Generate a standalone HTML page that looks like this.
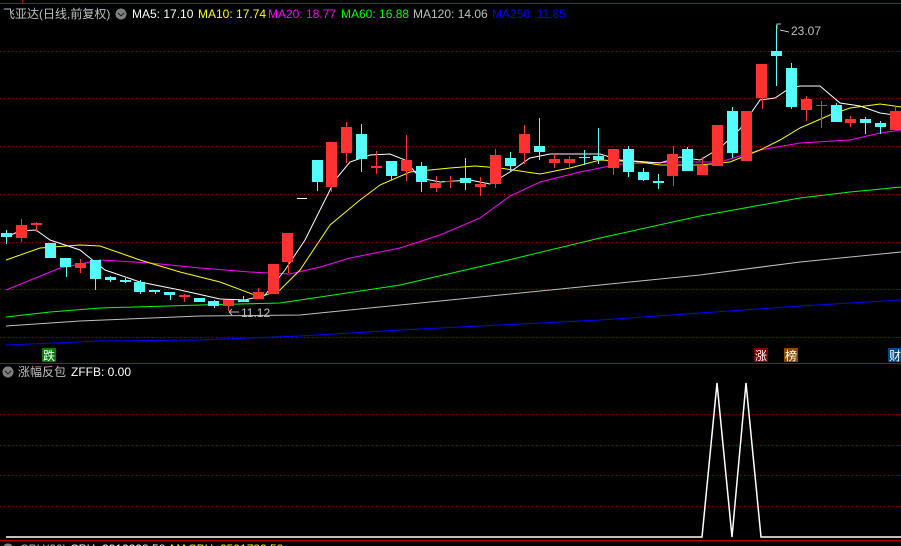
<!DOCTYPE html>
<html><head><meta charset="utf-8"><style>
html,body{margin:0;padding:0;background:#000;width:901px;height:546px;overflow:hidden}
svg{display:block}
text{font-family:"Liberation Sans","Noto Sans CJK SC",sans-serif;font-size:12px}
</style></head><body>
<svg width="901" height="546" viewBox="0 0 901 546" xmlns="http://www.w3.org/2000/svg" shape-rendering="crispEdges">
<rect width="901" height="546" fill="#000"/>
<line x1="0" y1="3.5" x2="901" y2="3.5" stroke="#c00000"/>
<line x1="22.5" y1="0" x2="22.5" y2="3" stroke="#c00000"/>
<g stroke="#900000" stroke-dasharray="1 3">
<line x1="0" y1="51.5" x2="901" y2="51.5"/>
<line x1="0" y1="98.5" x2="901" y2="98.5"/>
<line x1="0" y1="146.5" x2="901" y2="146.5"/>
<line x1="0" y1="194.5" x2="901" y2="194.5"/>
<line x1="0" y1="242.5" x2="901" y2="242.5"/>
<line x1="0" y1="289.5" x2="901" y2="289.5"/>
<line x1="0" y1="337.5" x2="901" y2="337.5"/>
<line x1="0" y1="414.5" x2="901" y2="414.5"/>
<line x1="0" y1="445.5" x2="901" y2="445.5"/>
<line x1="0" y1="475.5" x2="901" y2="475.5"/>
<line x1="0" y1="506.5" x2="901" y2="506.5"/>
</g>
<line x1="0" y1="363.5" x2="901" y2="363.5" stroke="#c00000"/>
<line x1="0" y1="540.5" x2="901" y2="540.5" stroke="#c00000"/>

<g fill="none" stroke-width="1" shape-rendering="auto">
<polyline stroke="#0000ff" points="6,345 100,341 200,340 300,336 400,330 500,325 600,320 700,313 800,306 901,300"/>
<polyline stroke="#c0c0c0" points="6,326 80,321 200,316 300,315 400,305 500,295 600,285 700,275 800,262 901,252"/>
<polyline stroke="#00ff00" points="6,317 50,312 100,308 200,305 280,303 320,297 400,285 500,262 600,238 700,216 750,207 800,198 850,192 901,187"/>
<polyline stroke="#ff00ff" points="6,290 60,268 100,260 150,263 200,268 250,272 290,274 320,267 350,258 400,248 440,235 480,218 510,196 540,182 580,172 620,164 680,162 720,162 760,150 800,143 850,140 880,133 901,130"/>
<polyline stroke="#ffff00" points="6,260 40,248 80,245 100,246 140,260 180,272 220,282 260,297 280,290 300,270 330,225 360,200 380,185 410,172 450,168 475,166 500,168 540,174 570,168 600,160 640,162 660,165 700,165 730,162 760,150 780,140 800,128 830,115 850,108 880,104 901,107"/>
<polyline stroke="#ffffff" points="6,237 20,231 36,230 50,240 80,250 105,270 140,282 180,290 220,299 245,300 265,295 285,270 305,240 320,210 335,180 350,162 370,155 390,154 405,160 420,178 440,182 470,180 490,184 510,172 530,158 550,154 580,154 600,154 620,160 660,163 680,157 700,160 720,148 740,129 760,100 775,98 790,88 800,86 820,86 840,103 860,106 880,113 901,116"/>
</g>

<g>
<line x1="6.5" y1="230" x2="6.5" y2="244" stroke="#54fcfc"/><rect x="1" y="233" width="11" height="4" fill="#54fcfc"/>
<line x1="21.5" y1="219" x2="21.5" y2="242" stroke="#ff3232"/><rect x="16" y="225" width="11" height="13" fill="#ff3232"/>
<line x1="36.5" y1="222" x2="36.5" y2="232" stroke="#ff3232"/><rect x="31" y="223" width="11" height="2" fill="#ff3232"/>
<rect x="45" y="243" width="11" height="15" fill="#54fcfc"/>
<line x1="66.5" y1="258" x2="66.5" y2="277" stroke="#54fcfc"/><rect x="60" y="258" width="11" height="9" fill="#54fcfc"/>
<line x1="80.5" y1="259" x2="80.5" y2="273" stroke="#ff3232"/><rect x="75" y="263" width="11" height="5" fill="#ff3232"/>
<line x1="95.5" y1="260" x2="95.5" y2="290" stroke="#54fcfc"/><rect x="90" y="260" width="11" height="19" fill="#54fcfc"/>
<line x1="110.5" y1="276" x2="110.5" y2="282" stroke="#54fcfc"/><rect x="105" y="277" width="11" height="3" fill="#54fcfc"/>
<line x1="125.5" y1="278" x2="125.5" y2="283" stroke="#54fcfc"/><rect x="120" y="280" width="11" height="2" fill="#54fcfc"/>
<line x1="140.5" y1="280" x2="140.5" y2="294" stroke="#54fcfc"/><rect x="134" y="282" width="11" height="10" fill="#54fcfc"/>
<line x1="155.5" y1="290" x2="155.5" y2="294" stroke="#54fcfc"/><rect x="149" y="290" width="11" height="2" fill="#54fcfc"/>
<line x1="170.5" y1="292" x2="170.5" y2="300" stroke="#54fcfc"/><rect x="164" y="292" width="11" height="3" fill="#54fcfc"/>
<line x1="184.5" y1="294" x2="184.5" y2="302" stroke="#ff3232"/><rect x="179" y="295" width="11" height="2" fill="#ff3232"/>
<rect x="194" y="298" width="11" height="4" fill="#54fcfc"/>
<line x1="214.5" y1="300" x2="214.5" y2="308" stroke="#54fcfc"/><rect x="208" y="301" width="11" height="5" fill="#54fcfc"/>
<line x1="228.5" y1="300" x2="228.5" y2="311" stroke="#ff3232"/><rect x="223" y="300" width="11" height="6" fill="#ff3232"/>
<line x1="243.5" y1="296" x2="243.5" y2="302" stroke="#54fcfc"/><rect x="238" y="300" width="11" height="2" fill="#54fcfc"/>
<line x1="258.5" y1="288" x2="258.5" y2="299" stroke="#ff3232"/><rect x="253" y="292" width="11" height="7" fill="#ff3232"/>
<rect x="268" y="264" width="11" height="30" fill="#ff3232"/>
<line x1="288.5" y1="233" x2="288.5" y2="273" stroke="#ff3232"/><rect x="282" y="233" width="11" height="29" fill="#ff3232"/>
<rect x="297" y="198" width="10" height="1" fill="#ffffff"/>
<line x1="317.5" y1="160" x2="317.5" y2="191" stroke="#54fcfc"/><rect x="312" y="160" width="11" height="22" fill="#54fcfc"/>
<line x1="331.5" y1="142" x2="331.5" y2="192" stroke="#ff3232"/><rect x="326" y="142" width="11" height="45" fill="#ff3232"/>
<line x1="346.5" y1="122" x2="346.5" y2="163" stroke="#ff3232"/><rect x="341" y="127" width="11" height="26" fill="#ff3232"/>
<line x1="361.5" y1="124" x2="361.5" y2="172" stroke="#54fcfc"/><rect x="356" y="134" width="11" height="25" fill="#54fcfc"/>
<line x1="376.5" y1="151" x2="376.5" y2="174" stroke="#ff3232"/><rect x="371" y="166" width="11" height="2" fill="#ff3232"/>
<line x1="391.5" y1="161" x2="391.5" y2="180" stroke="#54fcfc"/><rect x="386" y="161" width="11" height="15" fill="#54fcfc"/>
<line x1="406.5" y1="135" x2="406.5" y2="181" stroke="#ff3232"/><rect x="401" y="160" width="11" height="11" fill="#ff3232"/>
<line x1="421.5" y1="162" x2="421.5" y2="192" stroke="#54fcfc"/><rect x="416" y="166" width="11" height="16" fill="#54fcfc"/>
<line x1="436.5" y1="176" x2="436.5" y2="192" stroke="#ff3232"/><rect x="430" y="183" width="11" height="5" fill="#ff3232"/>
<line x1="450.5" y1="176" x2="450.5" y2="188" stroke="#ff3232"/><rect x="445" y="181" width="11" height="1" fill="#ff3232"/>
<line x1="465.5" y1="158" x2="465.5" y2="190" stroke="#54fcfc"/><rect x="460" y="178" width="11" height="5" fill="#54fcfc"/>
<line x1="480.5" y1="177" x2="480.5" y2="196" stroke="#ff3232"/><rect x="475" y="184" width="11" height="3" fill="#ff3232"/>
<line x1="495.5" y1="149" x2="495.5" y2="188" stroke="#ff3232"/><rect x="490" y="155" width="11" height="29" fill="#ff3232"/>
<line x1="510.5" y1="152" x2="510.5" y2="171" stroke="#54fcfc"/><rect x="505" y="158" width="11" height="8" fill="#54fcfc"/>
<line x1="524.5" y1="125" x2="524.5" y2="164" stroke="#ff3232"/><rect x="519" y="134" width="11" height="19" fill="#ff3232"/>
<line x1="539.5" y1="118" x2="539.5" y2="160" stroke="#54fcfc"/><rect x="534" y="146" width="11" height="6" fill="#54fcfc"/>
<line x1="554.5" y1="153" x2="554.5" y2="168" stroke="#ff3232"/><rect x="549" y="159" width="11" height="4" fill="#ff3232"/>
<line x1="569.5" y1="156" x2="569.5" y2="169" stroke="#ff3232"/><rect x="564" y="159" width="11" height="4" fill="#ff3232"/>
<line x1="584.5" y1="150" x2="584.5" y2="165" stroke="#54fcfc"/><rect x="579" y="157" width="11" height="1" fill="#54fcfc"/>
<line x1="598.5" y1="128" x2="598.5" y2="164" stroke="#54fcfc"/><rect x="593" y="156" width="11" height="4" fill="#54fcfc"/>
<line x1="613.5" y1="149" x2="613.5" y2="175" stroke="#ff3232"/><rect x="608" y="149" width="11" height="19" fill="#ff3232"/>
<line x1="628.5" y1="146" x2="628.5" y2="177" stroke="#54fcfc"/><rect x="623" y="149" width="11" height="23" fill="#54fcfc"/>
<line x1="643.5" y1="168" x2="643.5" y2="181" stroke="#54fcfc"/><rect x="638" y="172" width="11" height="8" fill="#54fcfc"/>
<line x1="658.5" y1="174" x2="658.5" y2="189" stroke="#54fcfc"/><rect x="653" y="181" width="11" height="2" fill="#54fcfc"/>
<line x1="673.5" y1="146" x2="673.5" y2="186" stroke="#ff3232"/><rect x="667" y="154" width="11" height="22" fill="#ff3232"/>
<line x1="687.5" y1="147" x2="687.5" y2="171" stroke="#54fcfc"/><rect x="682" y="149" width="11" height="22" fill="#54fcfc"/>
<line x1="702.5" y1="157" x2="702.5" y2="175" stroke="#ff3232"/><rect x="697" y="165" width="11" height="10" fill="#ff3232"/>
<rect x="712" y="125" width="11" height="41" fill="#ff3232"/>
<line x1="732.5" y1="107" x2="732.5" y2="158" stroke="#54fcfc"/><rect x="727" y="111" width="11" height="42" fill="#54fcfc"/>
<rect x="741" y="111" width="11" height="50" fill="#ff3232"/>
<line x1="762.5" y1="64" x2="762.5" y2="109" stroke="#ff3232"/><rect x="756" y="64" width="11" height="34" fill="#ff3232"/>
<line x1="776.5" y1="25" x2="776.5" y2="86" stroke="#54fcfc"/><rect x="771" y="51" width="11" height="5" fill="#54fcfc"/>
<line x1="791.5" y1="63" x2="791.5" y2="109" stroke="#54fcfc"/><rect x="786" y="68" width="11" height="39" fill="#54fcfc"/>
<line x1="806.5" y1="96" x2="806.5" y2="121" stroke="#ff3232"/><rect x="801" y="99" width="11" height="11" fill="#ff3232"/>
<line x1="821.5" y1="101" x2="821.5" y2="128" stroke="#ff3232"/><rect x="816" y="105" width="11" height="1" fill="#ff3232"/>
<line x1="836.5" y1="103" x2="836.5" y2="122" stroke="#54fcfc"/><rect x="831" y="105" width="11" height="17" fill="#54fcfc"/>
<line x1="850.5" y1="116" x2="850.5" y2="127" stroke="#ff3232"/><rect x="845" y="119" width="11" height="4" fill="#ff3232"/>
<line x1="865.5" y1="117" x2="865.5" y2="134" stroke="#54fcfc"/><rect x="860" y="119" width="11" height="4" fill="#54fcfc"/>
<line x1="880.5" y1="121" x2="880.5" y2="134" stroke="#54fcfc"/><rect x="875" y="123" width="11" height="4" fill="#54fcfc"/>
<line x1="895.5" y1="106" x2="895.5" y2="130" stroke="#ff3232"/><rect x="890" y="111" width="11" height="19" fill="#ff3232"/>
</g>

<g fill="#c0c0c0">
<text x="241" y="317">11.12</text>
<text x="791" y="35">23.07</text>
</g>
<path d="M229 312 L239 312 M229 312 L232 309 M229 312 L232 315" stroke="#c0c0c0" fill="none" shape-rendering="auto"/>
<path d="M777 29 L777 24 L781 24 M780 30 L789 32" stroke="#c0c0c0" fill="none"/>

<text x="3" y="18" fill="#c0c0c0" style="font-size:12px">飞亚达(日线,前复权)</text>
<circle cx="121" cy="14" r="5.5" fill="#808080"/><path d="M118 13 L121 16 L124 13" stroke="#222" fill="none" stroke-width="1.3"/>
<text x="132" y="18" fill="#ffffff">MA5: 17.10</text>
<text x="198" y="18" fill="#ffff00">MA10: 17.74</text>
<text x="268" y="18" fill="#ff00ff">MA20: 18.77</text>
<text x="341" y="18" fill="#00ff00">MA60: 16.88</text>
<text x="413" y="18" fill="#c0c0c0">MA120: 14.06</text>
<text x="492" y="18" fill="#0000ff">MA250: 11.85</text>

<rect x="42" y="348" width="14" height="14" fill="#008000"/><text x="43" y="360" fill="#fff">跌</text>
<rect x="754" y="348" width="14" height="14" fill="#800000"/><text x="755" y="360" fill="#fff">涨</text>
<rect x="784" y="348" width="14" height="14" fill="#8b4a00"/><text x="785" y="360" fill="#fff">榜</text>
<rect x="888" y="348" width="13" height="14" fill="#004a8c"/><text x="889" y="360" fill="#fff">财</text>

<circle cx="8" cy="372" r="5.5" fill="#808080"/><path d="M5 371 L8 374 L11 371" stroke="#222" fill="none" stroke-width="1.3"/>
<text x="18" y="376" fill="#c0c0c0" style="font-size:12px">涨幅反包</text>
<text x="71" y="376" fill="#ffffff">ZFFB: 0.00</text>
<polyline fill="none" stroke="#ffffff" stroke-width="1.5" shape-rendering="auto" points="6,537 702,537 717,383 732,537 746,383 761,537 901,537"/>

<text x="20" y="553" fill="#c0c0c0">CPH(30):</text>
<text x="70" y="553" fill="#ffffff">CPH: 2912298.58</text>
<text x="170" y="553" fill="#ffff00">MACPH: 2591782.58</text>
<circle cx="8" cy="549" r="5.5" fill="#808080"/>
</svg>
</body></html>
